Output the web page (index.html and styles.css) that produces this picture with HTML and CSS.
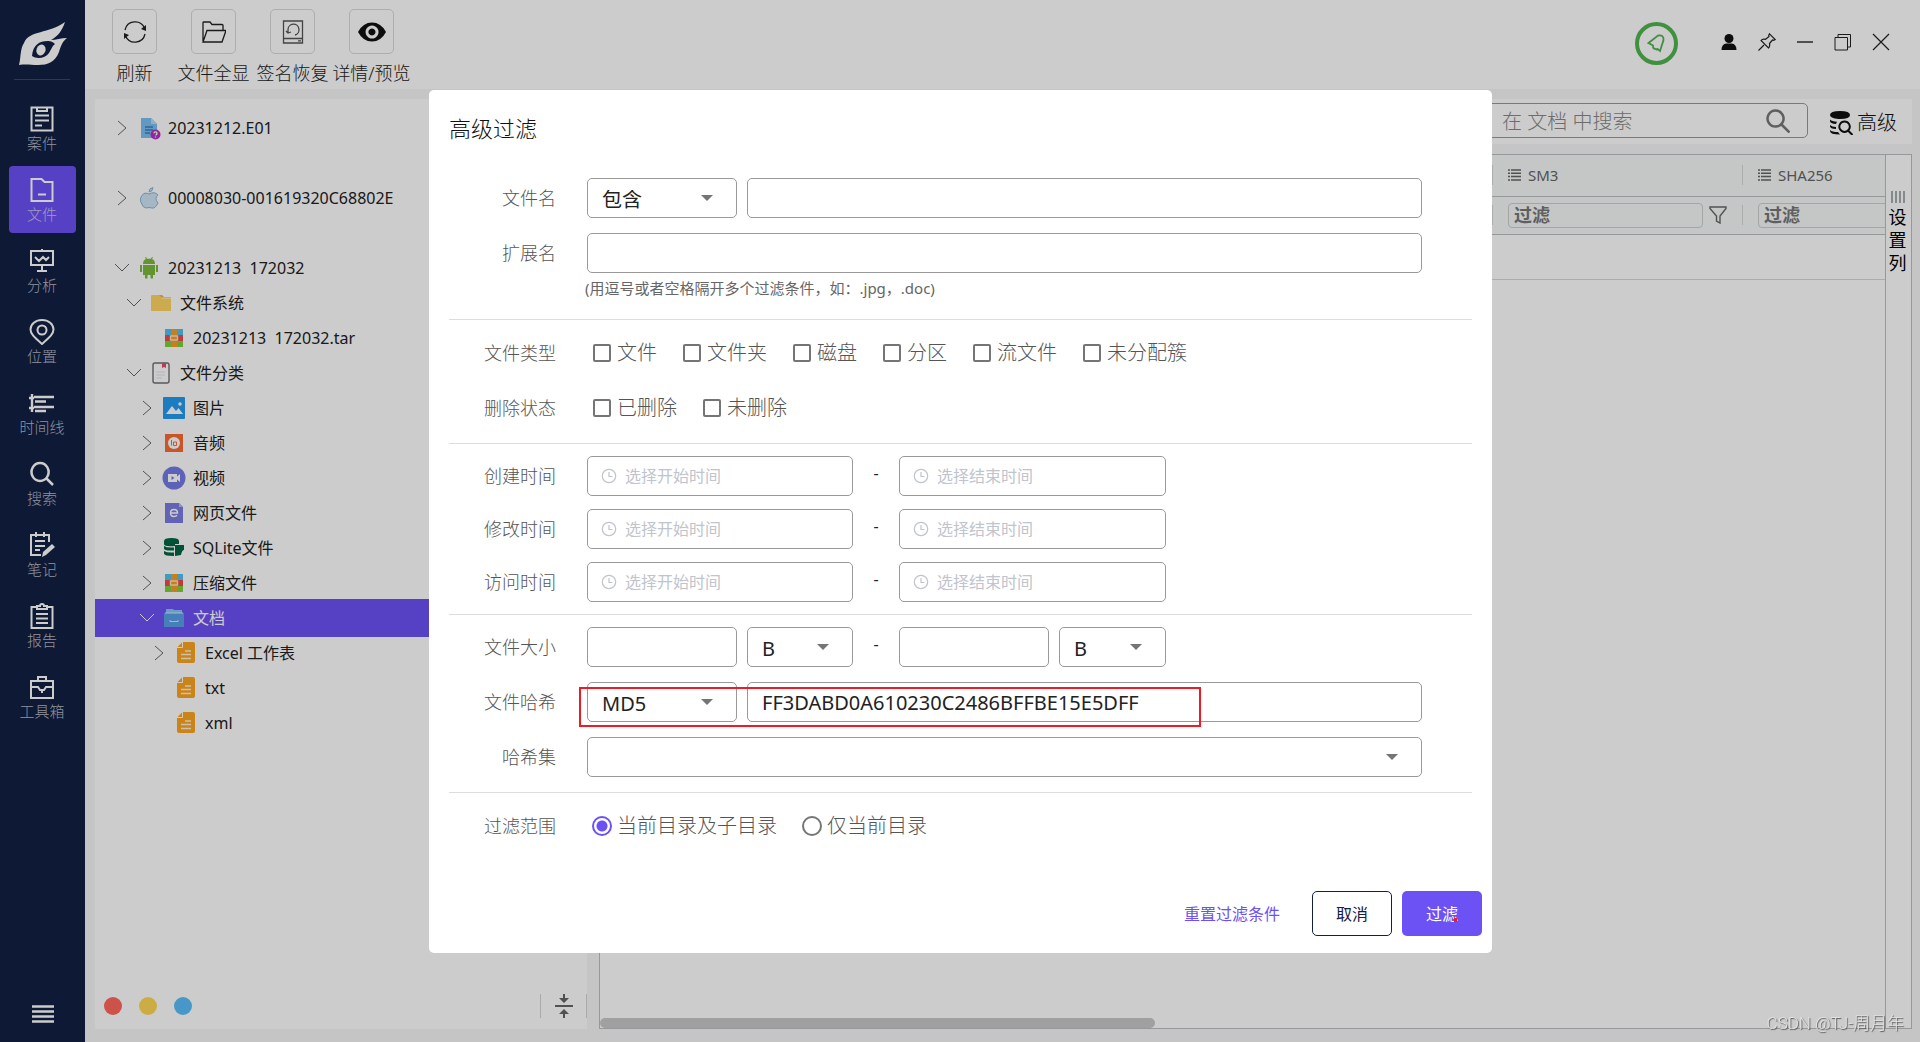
FILE: index.html
```html
<!DOCTYPE html>
<html lang="zh-CN">
<head>
<meta charset="utf-8">
<title>高级过滤</title>
<link rel="stylesheet" href="styles.css">
</head>
<body>
<svg class="defs" aria-hidden="true">
  <symbol id="right" viewBox="0 0 16 16"><path d="M4 1l8 7-8 7" fill="none" stroke="currentColor"/></symbol>
  <symbol id="down" viewBox="0 0 16 16"><path d="M1 4l7 7 7-7" fill="none" stroke="currentColor"/></symbol>
  <symbol id="archive" viewBox="0 0 24 24"><path fill="#4fc3ef" d="M3 3h18v6H3z"/><path fill="#ee4a50" d="M3 9h18v6H3z"/><path fill="#7ed13a" d="M3 15h18v6H3z"/><path fill="#f0a02c" d="M9 3h6v18H9z"/><path fill="#f0a02c" stroke="#ffe2b5" stroke-width="1.4" d="M8.500 10h7v4h-7z"/></symbol>
  <symbol id="doc" viewBox="0 0 24 24"><path fill="#fda51f" d="M9 1h10a2 2 0 0 1 2 2v17a2 2 0 0 1-2 2H5a2 2 0 0 1-2-2V7h5a1 1 0 0 0 1-1zM8 1.500V6H3.500z"/><path stroke="#fff3d8" stroke-width="1.300" d="M11 10h6M7 13.500h10M7 17.500h10"/></symbol>
  <symbol id="clock" viewBox="0 0 16 16"><g fill="none" stroke="currentColor" stroke-width="1.200"><circle cx="8" cy="8" r="6.700"/><path d="M8 4v4.500h3.500"/></g></symbol>
  <symbol id="list" viewBox="0 0 14 12"><path stroke="currentColor" stroke-width="1.500" d="M0 1h2M3 1h10M0 4.300h2M3 4.300h10M0 7.600h2M3 7.600h10M0 11h2M3 11h10"/></symbol>
</svg>

<div class="app">
  <nav class="sidebar">
    <svg class="logo" viewBox="0 0 48 43"><path fill="#fff" fill-rule="evenodd" d="M46 0C43 9 39 14 32 18c5 0 10-2 16-2-5 4-6 8-8 14-4 10-11 13-21 13-7 0-12-1-19 0 2-8 1-16 5-22C10 8 30 12 46 0zM29 19c-9 0-15 4-16 15 4 3 13 3 17-3 2-3 3-7 6-9-2-2-4-3-7-3z"/><ellipse cx="22" cy="28" rx="4.500" ry="5.500" fill="#fff" transform="rotate(20 22 28)"/></svg>
    <a class="nav" href="#"><svg viewBox="0 0 26 26"><g fill="none" stroke="currentColor" stroke-width="2"><path d="M2.500 1.500h21v23h-21zM8 2v3h10V2M6 9.500h14M6 14.500h14M6 19.500h7"/></g></svg>案件</a>
    <a class="nav active" href="#"><svg viewBox="0 0 26 26"><path fill="none" stroke="currentColor" stroke-width="2" d="M2.500 2h10l3 3h8v19h-21zM9 17.500h8"/></svg>文件</a>
    <a class="nav" href="#"><svg viewBox="0 0 26 26"><path fill="none" stroke="currentColor" stroke-width="2" d="M13 1v2M2 3h22v14H2zM13 17v6M8 23h10M6 9l4 4 4-4 3 3 3-3"/></svg>分析</a>
    <a class="nav" href="#"><svg viewBox="0 0 26 26"><g fill="none" stroke="currentColor" stroke-width="2"><path d="M13 25C5 18 1.500 15 1.500 10.500 1.500 5 6.500 1 13 1s11.500 4 11.500 9.500C24.500 15 21 18 13 25z"/><circle cx="13" cy="11" r="4.500"/></g></svg>位置</a>
    <a class="nav" href="#"><svg viewBox="0 0 26 26"><path fill="none" stroke="currentColor" stroke-width="2.400" d="M3 4v18M0 8h5M0 18h5M5 7h20M6 11.500h11M5 17h20M6 21h11"/></svg>时间线</a>
    <a class="nav" href="#"><svg viewBox="0 0 26 26"><path fill="none" stroke="currentColor" stroke-width="2.500" d="M11 2a8.500 9 0 1 0 .1 0zM17 17l7 7"/></svg>搜索</a>
    <a class="nav" href="#"><svg viewBox="0 0 26 26"><path fill="none" stroke="currentColor" stroke-width="2" d="M20 10V3H2v20h10M7 0v5M15 0v5M6 9h10M6 14h10M6 18h5"/><path fill="currentColor" d="M23 12l3 3-9 8-4 2 1-5z"/></svg>笔记</a>
    <a class="nav" href="#"><svg viewBox="0 0 26 26"><path fill="none" stroke="currentColor" stroke-width="2" d="M8 4H2.500v21h21V4H18M8 6h10V3h-3a2 2 0 0 0-4 0H8zM7 11h12M7 15.500h12M7 20h12"/></svg>报告</a>
    <a class="nav" href="#"><svg viewBox="0 0 26 26"><path fill="none" stroke="currentColor" stroke-width="2" d="M2 7h22v17H2zM9 7V3h8v4M2 13h7l2 3h4l2-3h7M13 16v3"/></svg>工具箱</a>
    <button class="menu" aria-label="菜单"><svg viewBox="0 0 22 18"><path stroke="currentColor" stroke-width="2.500" d="M0 1.500h22M0 6.500h22M0 11.500h22M0 16.500h22"/></svg></button>
  </nav>

  <div class="main">
    <header class="header">
      <div class="tools">
        <button class="tool"><span><svg viewBox="0 0 24 24"><path fill="none" stroke="currentColor" stroke-width="1.300" d="M2 10A10.300 10.300 0 0 1 21.500 8M22 14A10.300 10.300 0 0 1 2.500 16"/><path fill="currentColor" d="M23 5v6l-5-2zM1 19v-6l5 2z"/></svg></span>刷新</button>
        <button class="tool"><span><svg viewBox="0 0 24 24"><path fill="none" stroke="currentColor" stroke-width="1.300" d="M1 21V2.500Q1 2 2 2h6l2 2.500h10q1 0 1 1V10M1 22l4-11.500h19L20 22z"/></svg></span>文件全显</button>
        <button class="tool"><span><svg viewBox="0 0 24 24"><path fill="none" stroke="#555" stroke-width="1.300" d="M2.500 1h19v22h-19zM2.500 18.500h19M17 20.800h3M7 13V9.500m0 0a5.500 5.500 0 1 1 7 5.500M5 11l2 2 3-1"/></svg></span>签名恢复</button>
        <button class="tool"><span><svg class="eye" viewBox="0 0 28 24"><path fill="#111" fill-rule="evenodd" d="M0 12Q5 2.500 14 2.500T28 12Q23 21.500 14 21.500T0 12zm14-6.500a6.500 6.500 0 1 0 .1 0zm0 3a3.500 3.500 0 1 1-.1 0z"/></svg></span>详情/预览</button>
      </div>
      <div class="window-bar">
        <button class="bell" aria-label="通知"><svg viewBox="0 0 22 22"><path fill="none" stroke="currentColor" stroke-width="1.800" d="M2.500 11L12 3.500q6-1 5.500 4.500L14 19l-2.500-2q-5 1-4.500-3.500zM7.500 16l4 2"/></svg></button>
        <button class="win" aria-label="用户"><svg viewBox="0 0 18 18"><circle cx="9" cy="5.500" r="4.500" fill="#111"/><path fill="#111" d="M1.500 17q0-6 5-6.500h5q5 .5 5 6.500z"/></svg></button>
        <button class="win" aria-label="置顶"><svg viewBox="0 0 18 18"><path fill="none" stroke="currentColor" stroke-width="1.200" d="M11.500.8l5.700 5.700-1.500.8-1.200-.3-3 3.500q.7 3-1 4.500L3 7.500q1.500-2 4.500-1.200L11 3.500l-.3-1.200zM6 12l-5.500 5.500"/></svg></button>
        <button class="win" aria-label="最小化"><svg viewBox="0 0 18 18"><path stroke="currentColor" stroke-width="1.400" d="M1 9h16"/></svg></button>
        <button class="win" aria-label="还原"><svg viewBox="0 0 18 18"><path fill="none" stroke="currentColor" d="M1 4.500h12.500V17H1zM4 4.500v-3h12.500V14h-3"/></svg></button>
        <button class="win" aria-label="关闭"><svg viewBox="0 0 18 18"><path stroke="currentColor" stroke-width="1.200" d="M1 1l16 16M17 1L1 17"/></svg></button>
      </div>
    </header>

    <div class="work">
      <aside class="tree-panel">
        <ul class="tree">
          <li class="row root"><svg class="chev"><use href="#right"/></svg><svg class="ico" viewBox="0 0 24 24"><path fill="#7cc0f2" d="M4 2h10l6 6v14H4z"/><path fill="#b5dcf8" d="M14 2l6 6h-6z"/><path stroke="#3a7fc4" stroke-width="1.500" d="M8 11h8M8 14h8M8 17h5"/><circle cx="18.500" cy="18.500" r="5" fill="#b533c2"/><path fill="none" stroke="#fff" stroke-width="1.300" d="M17 17.300q0-1.500 1.500-1.500T20 17.300t-1.500 1.900M18.500 20.400v1.200"/></svg>20231212.E01</li>
          <li class="row root"><svg class="chev"><use href="#right"/></svg><svg class="ico" viewBox="0 0 24 24"><path fill="#cfe4f5" stroke="#85b4dd" d="M12 8q6-3 9 1-4 3 0 8-3 6-6 5t-6 0Q6 22 4 16.500T7 7.500q2-1 5 .5zM12 6q0-4 4-4.500 0 4-4 4.500z"/></svg>00008030-001619320C68802E</li>
          <li class="row"><svg class="chev"><use href="#down"/></svg><svg class="ico" viewBox="0 0 24 24"><path fill="#7eb93c" d="M6 9h12v10h-2v3.500h-2.500V19h-3v3.500H8V19H6zM3 9h2v7H3zM19 9h2v7h-2zM6 8q0-4 3-5L8 1.500 9 1l1 1.700h4L15 1l1 .5L15 3q3 1 3 5z"/></svg>20231213&nbsp; 172032</li>
          <li class="row l1"><svg class="chev"><use href="#down"/></svg><svg class="ico" viewBox="0 0 24 24"><path fill="#ffd662" d="M2 5q0-1 1-1h9l2 2h8v14H2z"/><path fill="#f3ae4e" d="M10 4h3l2 2h-3z"/><path fill="#ffe9a8" d="M13 7h9v1h-9z"/></svg>文件系统</li>
          <li class="row l2"><svg class="chev"></svg><svg class="ico"><use href="#archive"/></svg>20231213&nbsp; 172032.tar</li>
          <li class="row l1"><svg class="chev"><use href="#down"/></svg><svg class="ico" viewBox="0 0 24 24"><rect x="4" y="2" width="16" height="20" rx="2" fill="#fff" stroke="#6d7078" stroke-width="1.400"/><path fill="#f4476b" d="M13 2h4v5l-2-1-2 1z"/><path stroke="#dde3ea" d="M7 11h9M7 14h9M7 17h6"/></svg>文件分类</li>
          <li class="row l2"><svg class="chev"><use href="#right"/></svg><svg class="ico" viewBox="0 0 24 24"><rect x="1" y="1" width="22" height="22" rx="1" fill="#259cf1"/><path fill="#fff" d="M4 18l6-8 4 5 2.500-3L21 18z"/><circle cx="18" cy="8" r="1.700" fill="#fff"/></svg>图片</li>
          <li class="row l2"><svg class="chev"><use href="#right"/></svg><svg class="ico" viewBox="0 0 24 24"><path fill="#fb6c33" d="M3 3h18v18H3z"/><circle cx="12" cy="12" r="6" fill="#fff"/><path fill="none" stroke="#fb6c33" d="M9.500 9v5.500M11.500 11v3.500h3V11h-3"/></svg>音频</li>
          <li class="row l2"><svg class="chev"><use href="#right"/></svg><svg class="ico" viewBox="0 0 24 24"><circle cx="12" cy="12" r="11.500" fill="#757be8"/><path fill="#fff" fill-rule="evenodd" d="M6 8h9v2.500L18 8v8l-3-2.500V16H6zm3.500 2v4l3-2z"/></svg>视频</li>
          <li class="row l2"><svg class="chev"><use href="#right"/></svg><svg class="ico" viewBox="0 0 24 24"><path fill="#7b7ce2" d="M3 2h14l4 4v16H3z"/><path fill="#b9b9f3" d="M17 2l4 4h-4z"/><path fill="none" stroke="#fff" stroke-width="1.400" d="M8.500 12h7q0-3.500-3.500-3.500T8.500 12q0 3.500 3.500 3.500 2 0 3-1.200"/></svg>网页文件</li>
          <li class="row l2"><svg class="chev"><use href="#right"/></svg><svg class="ico" viewBox="0 0 24 24"><path fill="#006644" d="M2 5q0-3 7.500-3T17 5v3H13v2q-11 1-11-2zM2 10q3 2 10 1.500v3Q2 15 2 12.500zM2 15q3 2 10 1.500V20Q2 20 2 17.500zM13 9h9v5q-2 0-3 5l-6 1z"/></svg>SQLite文件</li>
          <li class="row l2"><svg class="chev"><use href="#right"/></svg><svg class="ico"><use href="#archive"/></svg>压缩文件</li>
          <li class="row l2 selected"><svg class="chev"><use href="#down"/></svg><svg class="ico" viewBox="0 0 24 24"><path fill="#83c5f7" d="M4 3h7l1 1h8v4H4z"/><path fill="#599fe8" d="M2 7h20v14H2z"/><path fill="none" stroke="#cde8ff" d="M8 14v1.500h8V14M3 7h18"/></svg>文档</li>
          <li class="row l3"><svg class="chev"><use href="#right"/></svg><svg class="ico"><use href="#doc"/></svg>Excel 工作表</li>
          <li class="row l3"><svg class="chev"></svg><svg class="ico"><use href="#doc"/></svg>txt</li>
          <li class="row l3"><svg class="chev"></svg><svg class="ico"><use href="#doc"/></svg>xml</li>
        </ul>
        <div class="tree-foot">
          <i class="dot red"></i><i class="dot yellow"></i><i class="dot blue"></i>
          <button class="collapse" aria-label="折叠"><svg viewBox="0 0 18 24"><path fill="#666" d="M0 11h18v2H0zM8 0h2v4h4L9 9 4 4h4zM8 24h2v-4h4l-5-5-5 5h4z"/></svg></button>
        </div>
      </aside>

      <section class="content">
        <div class="search-panel">
          <div class="search"><input type="text" placeholder="在 文档 中搜索" aria-label="搜索"><svg viewBox="0 0 24 24"><path fill="none" stroke="currentColor" stroke-width="2.500" d="M9.500 1.500a8 8 0 1 0 .1 0zM15.500 15.500l8 8"/></svg></div>
          <button class="advanced"><svg viewBox="0 0 24 24"><path fill="currentColor" d="M1 4q0-4 10-4t10 4-10 4S1 8 1 4zM1 8.500q2 2 7 2.200L7 13q-6-.5-6-3zM1 14q2 2 6 2v2q-6 0-6-3zM1 19q2 2 8 2l2 2.500Q1 23.500 1 20z"/><path fill="none" stroke="currentColor" stroke-width="2" d="M15.500 10.500a5.200 5.200 0 1 0 .1 0zM19 19.500l4.500 4.500"/></svg>高级</button>
        </div>
        <div class="grid-panel">
          <div class="grid-body">
            <table class="grid">
              <colgroup><col class="c-wide"><col class="c-hash"><col class="c-hash"></colgroup>
              <thead>
                <tr class="names"><th></th><th><div class="cell"><svg><use href="#list"/></svg>SM3</div></th><th><div class="cell"><svg><use href="#list"/></svg>SHA256</div></th></tr>
                <tr class="filters"><td></td><td><div class="cell"><input type="text" placeholder="过滤" aria-label="SM3 过滤"><svg class="funnel" viewBox="0 0 18 18"><path fill="none" stroke="currentColor" stroke-width="1.400" d="M1 1h16v1.500L11 10v7l-3.500-2v-5L1 2.500z"/></svg></div></td><td><div class="cell"><input type="text" placeholder="过滤" aria-label="SHA256 过滤"></div></td></tr>
              </thead>
              <tbody><tr><td></td><td></td><td></td></tr></tbody>
            </table>
            <div class="scrollbar"></div>
          </div>
          <button class="side-tab"><svg viewBox="0 0 14 12"><path stroke="#8b9496" stroke-width="1.500" d="M1 0v12M5 0v12M9 0v12M13 0v12"/></svg><span>设</span><span>置</span><span>列</span></button>
        </div>
      </section>
    </div>
  </div>
</div>

<div class="overlay">
  <form class="dialog" role="dialog" aria-labelledby="dlg-title">
    <h1 id="dlg-title">高级过滤</h1>

    <div class="section names-section">
      <div class="line"><label for="name">文件名</label>
        <div class="fields"><div class="select mid"><select aria-label="匹配方式"><option>包含</option></select></div><input class="box grow" id="name" type="text"></div></div>
      <div class="line"><label for="ext">扩展名</label>
        <div class="fields"><input class="box grow" id="ext" type="text"></div></div>
      <p class="hint">(用逗号或者空格隔开多个过滤条件，如：.jpg，.doc)</p>
    </div>

    <div class="section checks-section">
      <div class="line"><span class="label">文件类型</span>
        <div class="choices">
          <label><input type="checkbox">文件</label><label><input type="checkbox">文件夹</label><label><input type="checkbox">磁盘</label><label><input type="checkbox">分区</label><label><input type="checkbox">流文件</label><label><input type="checkbox">未分配簇</label>
        </div></div>
      <div class="line"><span class="label">删除状态</span>
        <div class="choices"><label><input type="checkbox">已删除</label><label><input type="checkbox">未删除</label></div></div>
    </div>

    <div class="section times-section">
      <div class="line"><label for="t1">创建时间</label>
        <div class="fields range"><div class="box date"><svg><use href="#clock"/></svg><input id="t1" type="text" placeholder="选择开始时间"></div><span class="dash">-</span><div class="box date"><svg><use href="#clock"/></svg><input type="text" placeholder="选择结束时间" aria-label="创建结束时间"></div></div></div>
      <div class="line"><label for="t2">修改时间</label>
        <div class="fields range"><div class="box date"><svg><use href="#clock"/></svg><input id="t2" type="text" placeholder="选择开始时间"></div><span class="dash">-</span><div class="box date"><svg><use href="#clock"/></svg><input type="text" placeholder="选择结束时间" aria-label="修改结束时间"></div></div></div>
      <div class="line"><label for="t3">访问时间</label>
        <div class="fields range"><div class="box date"><svg><use href="#clock"/></svg><input id="t3" type="text" placeholder="选择开始时间"></div><span class="dash">-</span><div class="box date"><svg><use href="#clock"/></svg><input type="text" placeholder="选择结束时间" aria-label="访问结束时间"></div></div></div>
    </div>

    <div class="section">
      <div class="line"><label for="size">文件大小</label>
        <div class="fields range"><div class="pair"><input class="box mid" id="size" type="text"><div class="select grow"><select aria-label="最小单位"><option>B</option></select></div></div><span class="dash">-</span><div class="pair"><input class="box mid" type="text" aria-label="最大"><div class="select grow"><select aria-label="最大单位"><option>B</option></select></div></div></div></div>
      <div class="line"><label for="hash">文件哈希</label>
        <div class="fields"><div class="select mid"><select aria-label="哈希算法"><option>MD5</option></select></div><input class="box grow" id="hash" type="text" value="FF3DABD0A610230C2486BFFBE15E5DFF"><i class="mark"></i></div></div>
      <div class="line"><label for="set">哈希集</label>
        <div class="fields"><div class="select grow"><select id="set"><option></option></select></div></div></div>
    </div>

    <div class="section scope-section">
      <div class="line"><span class="label">过滤范围</span>
        <div class="choices"><label><input type="radio" name="scope" checked>当前目录及子目录</label><label><input type="radio" name="scope">仅当前目录</label></div></div>
    </div>

    <div class="actions">
      <button type="button" class="btn text">重置过滤条件</button>
      <button type="button" class="btn outline">取消</button>
      <button type="button" class="btn primary">过滤<i class="spot"></i></button>
    </div>
  </form>
</div>
<div class="watermark">CSDN @TJ-周月年</div>
</body>
</html>
```
FILE: styles.css
```css
* { box-sizing: border-box; }

:root {
  --purple: #6c52f5;
  --line: #bbc0c4;
  --field: #999;
}

body {
  margin: 0;
  font: 400 16px/20px "Noto Sans", "Noto Sans CJK SC", sans-serif;
  color: #222;
  background: #f7f7f7;
}

button, input, select { font: inherit; color: inherit; }
button { padding: 0; border: 0; background: none; cursor: pointer; }
input, select { margin: 0; min-width: 0; outline: 0; }
svg { display: block; flex: none; }
.defs { position: absolute; width: 0; height: 0; }

.app { display: flex; height: 100vh; overflow: hidden; }

/* sidebar */
.sidebar {
  flex: none;
  width: 85px;
  display: flex;
  flex-direction: column;
  align-items: center;
  gap: 4px;
  padding: 22px 0 19px;
  background: #112043;
  color: #fff;
}
.logo { width: 48px; height: 43px; margin-bottom: 15px; }
.nav {
  width: 67px;
  height: 67px;
  display: flex;
  flex-direction: column;
  align-items: center;
  padding: 11px 1px 0 0;
  border-radius: 4px;
  font-size: 15px;
  font-weight: 300;
  line-height: 22px;
  text-decoration: none;
  color: #b4b8c5;
}
.nav svg { width: 26px; height: 26px; color: #fff; }
.nav.active { background: var(--purple); color: #c9c1fb; }
.logo + .nav { margin-top: 11px; position: relative; }
.logo + .nav::before {
  content: "";
  position: absolute;
  top: -16px;
  width: 56px;
  height: 1px;
  background: #34477c;
}
.menu { margin-top: auto; }
.menu svg { width: 22px; height: 18px; color: #fff; }

/* header */
.main { flex: 1; min-width: 0; display: flex; flex-direction: column; }
.header {
  flex: none;
  height: 89px;
  display: flex;
  justify-content: space-between;
  padding: 9px 20px 0 10px;
  background: #fff;
}
.tools { display: flex; align-items: flex-start; }
.tool {
  width: 79px;
  display: flex;
  flex-direction: column;
  align-items: center;
  font-size: 18px;
  font-weight: 300;
  line-height: 36px;
  white-space: nowrap;
}
.tool span {
  width: 45px;
  height: 45px;
  display: grid;
  place-items: center;
  margin-bottom: 1px;
  border: 1px solid #dadada;
  border-radius: 5px;
}
.tool svg { width: 24px; height: 24px; }
.tool .eye { width: 28px; }
.window-bar { display: flex; align-items: center; height: 68px; }
.bell {
  width: 43px;
  height: 43px;
  display: grid;
  place-items: center;
  margin-right: 32px;
  border: 4px solid #4fb650;
  border-radius: 50%;
  color: #4fb650;
}
.bell svg { width: 22px; height: 22px; }
.win { width: 38px; display: grid; place-items: center; padding-bottom: 2px; }
.win svg { width: 18px; height: 18px; }

/* file tree */
.work { flex: 1; min-height: 0; display: flex; gap: 12px; padding: 10px 8px 13px 10px; }
.tree-panel {
  flex: none;
  width: 492px;
  display: flex;
  flex-direction: column;
  background: #fff;
}
.tree { flex: 1; margin: 0; padding: 11px 0 0; list-style: none; }
.row { display: flex; align-items: center; gap: 7px; height: 35px; padding-left: 19px; }
.root { margin-bottom: 35px; }
.l1 { padding-left: 31px; }
.l2 { padding-left: 44px; }
.l3 { padding-left: 56px; }
.selected { height: 38px; margin: -1px 0 -2px; background: var(--purple); color: #fff; }
.chev { width: 16px; height: 16px; color: #666; }
.selected .chev { color: #fff; }
.ico { width: 24px; height: 24px; }
.tree-foot { display: flex; align-items: center; gap: 17px; height: 47px; padding-left: 9px; }
.dot { width: 18px; height: 18px; border-radius: 50%; }
.red { background: #ff675d; }
.yellow { background: #ffd954; }
.blue { background: #59bffc; }
.collapse {
  width: 47px;
  height: 24px;
  display: grid;
  place-items: center;
  margin-left: auto;
  border: solid #d5d5d5;
  border-width: 0 1px;
}
.collapse svg { width: 18px; height: 24px; }

/* search and table */
.content { flex: 1; min-width: 0; display: flex; flex-direction: column; gap: 10px; }
.search-panel {
  height: 45px;
  display: flex;
  align-items: center;
  justify-content: flex-end;
  gap: 21px;
  padding: 0 15px 2px 0;
  background: #fff;
}
.search {
  width: 330px;
  height: 35px;
  display: flex;
  align-items: center;
  padding: 0 17px 0 23px;
  border: 1px solid #999;
  border-radius: 5px;
  color: #777;
}
.search input { flex: 1; border: 0; background: none; padding: 2px 0 0; font-size: 20px; font-weight: 300; line-height: 28px; }
.search input::placeholder { color: #888; }
.search svg { width: 24px; height: 24px; }
.advanced { display: flex; align-items: center; gap: 4px; padding-top: 4px; color: #111; font-size: 20px; font-weight: 300; line-height: 28px; }
.advanced svg { width: 24px; height: 24px; }

.grid-panel { flex: 1; min-height: 0; display: flex; border: 1px solid var(--line); background: #fff; }
.grid-body { flex: 1; min-width: 0; overflow: hidden; display: flex; flex-direction: column; justify-content: space-between; }
.grid { width: 1392px; table-layout: fixed; border-collapse: collapse; }
.c-wide { width: 892px; }
.c-hash { width: 250px; }
.grid th, .grid td { padding: 0; text-align: left; border-bottom: 1px solid var(--line); }
.grid thead { background: #f5f9f8; }
.names { height: 41px; }
.filters { height: 38px; }
.grid tbody tr { height: 45px; }
.grid tbody td { border-color: #d5d8da; }
.cell {
  height: 20px;
  display: flex;
  align-items: center;
  gap: 6px;
  padding-left: 15px;
  border-left: 1px solid #d5d8da;
  font-size: 15px;
  font-weight: 400;
  color: #666;
}
.cell svg { width: 14px; height: 12px; }
.cell .funnel { width: 18px; height: 18px; }
.cell input {
  width: 195px;
  height: 25px;
  padding: 0 5px;
  border: 1px solid #ccd0d0;
  border-radius: 4px;
  background: none;
  font-size: 18px;
  font-weight: 700;
}
.cell input::placeholder { color: #777; }
.scrollbar { width: 555px; height: 10px; border-radius: 5px; background: #c8c8c8; }
.side-tab {
  width: 26px;
  display: flex;
  flex-direction: column;
  align-items: center;
  padding: 36px 2px 0 0;
  border-left: 1px solid var(--line);
  color: #000;
  font-size: 18px;
  line-height: 23px;
}
.side-tab svg { width: 14px; height: 12px; margin-bottom: 3px; }

/* dialog */
.overlay {
  position: fixed;
  inset: 0;
  display: grid;
  place-items: center;
  padding: 1px 0 0 1px;
  background: rgba(0, 0, 0, .2);
}
.dialog {
  width: 1063px;
  max-width: 100%;
  padding: 22px 20px 17px;
  border-radius: 5px;
  background: #fff;
  color: #666;
}
.dialog h1 { margin: 0 0 34px; font-size: 22px; font-weight: 300; line-height: 32px; color: #111; }
.section {
  display: flex;
  flex-direction: column;
  gap: 15px;
  padding: 12px 0 15px;
  border-bottom: 1px solid #ddd;
}
.names-section { padding: 0 0 16px; }
.checks-section { padding-top: 13px; }
.times-section { gap: 13px; padding-bottom: 12px; }
.scope-section { padding: 13px 0 0; border: 0; }
.line { display: grid; grid-template-columns: 107px 1fr; column-gap: 31px; align-items: center; }
.line > label, .label { text-align: right; font-size: 18px; font-weight: 300; line-height: 40px; color: #555; }
.fields { position: relative; display: flex; gap: 10px; margin-right: 50px; }
.range { display: grid; grid-template-columns: 266px 26px 267px; }
.pair { display: flex; gap: 10px; }
.box, .select select {
  height: 40px;
  border: 1px solid var(--field);
  border-radius: 5px;
  background: #fff;
  color: #222;
  font-size: 20px;
}
input.box { padding: 0 14px; }
.mid { flex: none; width: 150px; }
.grow { flex: 1; }
.select { display: grid; align-items: center; min-width: 0; }
.select select { grid-area: 1 / 1; width: 100%; padding: 4px 14px 0; appearance: none; }
.select::after {
  content: "";
  grid-area: 1 / 1;
  justify-self: end;
  margin-right: 24px;
  border: 6px solid transparent;
  border-top-color: #757575;
  border-bottom: 0;
  pointer-events: none;
}
.date { display: flex; align-items: center; gap: 8px; padding-left: 13px; font-size: 16px; color: #c0c4cc; }
.date svg { width: 16px; height: 16px; }
.date input { flex: 1; border: 0; padding: 0; background: none; line-height: 24px; }
.date input::placeholder { color: #c0c4cc; }
.dash { color: #222; line-height: 34px; text-align: center; }
.hint { margin: -15px 0 0 136px; font-size: 15px; line-height: 30px; }
.choices { display: flex; gap: 25px; padding-left: 5px; }
.choices label { display: flex; align-items: center; gap: 5px; font-size: 20px; font-weight: 300; line-height: 40px; color: #555; }
.choices input { appearance: none; border: 2px solid #757575; background: #fff; }
.choices input[type="checkbox"] { width: 18px; height: 18px; margin: 0 1px; border-radius: 2px; }
.choices input[type="radio"] { width: 20px; height: 20px; border-radius: 50%; }
.choices input[type="radio"]:checked {
  border-color: var(--purple);
  background: radial-gradient(circle, var(--purple) 5px, #fff 6px);
}
.mark {
  position: absolute;
  inset: 5px 221px -5px -8px;
  border: 2px solid #ed1c24;
  pointer-events: none;
}
.actions { display: flex; justify-content: flex-end; gap: 10px; margin: 45px -10px 0 0; }
.btn { height: 45px; border-radius: 5px; font-size: 16px; }
.text { margin-right: 22px; color: var(--purple); }
.outline { width: 80px; border: 1px solid #112043; color: #112043; }
.primary { position: relative; width: 80px; background: var(--purple); color: #fff; }
.spot { position: absolute; left: 52px; top: 27px; width: 3px; height: 4px; background: #ed1c24; }

.watermark {
  position: fixed;
  right: 16px;
  bottom: 8px;
  font: 300 17px/22px Roboto, "Noto Sans CJK SC", sans-serif;
  color: #e2e2e2;
  text-shadow: 1px 1px 1px #555;
}
```
